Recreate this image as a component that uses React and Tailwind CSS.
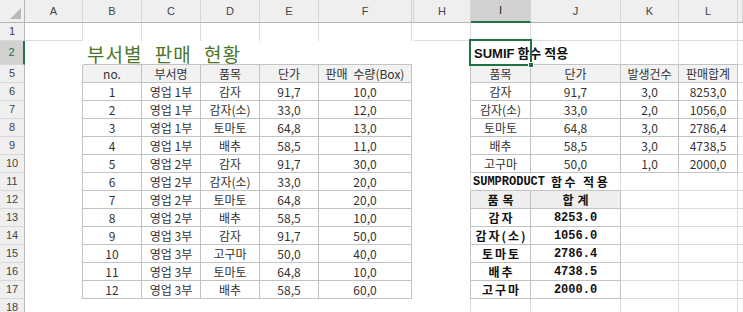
import React from 'react';

const FK = "font-['Noto_Sans_CJK_KR',sans-serif]";
const FM = "font-['Liberation_Mono','Noto_Sans_CJK_KR',monospace]";

const TB = 'border-r border-b border-[#c3c3c3]';
const GB = 'border-r border-b border-[#dcdcdc]';
const GR = 'border-r border-[#dcdcdc]';
const TR = 'border-r border-[#c3c3c3]';
const GBo = 'border-b border-[#dcdcdc]';
const TBo = 'border-b border-[#c3c3c3]';

const wRH = 'w-[25px]';
const wA = 'w-[58px]';
const wB = 'w-[59px]';
const wF = 'w-[93px]';
const wG = 'w-[2px]';
const wH = 'w-[57px]';
const wI = 'w-[60px]';
const wJ = 'w-[90px]';
const wK = 'w-[58px]';
const wL = 'w-[59px]';
const wM = 'flex-1 min-w-0';

function C({ w, cls = '', children }) {
  return (
    <div className={`${w} shrink-0 h-full flex items-center justify-center leading-none whitespace-nowrap ${cls}`}>
      {children}
    </div>
  );
}

function RH({ n, sel }) {
  return (
    <div
      className={`${wRH} shrink-0 h-full flex items-center justify-center text-[11px] leading-none font-['Liberation_Sans',sans-serif] border-b border-b-[#d8d8d8] ${
        sel
          ? 'bg-[#d2d2d2] border-r-2 border-r-[#217346] text-[#217346]'
          : 'bg-[#efefef] border-r border-r-[#bababa] text-[#444]'
      }`}
    >
      {n}
    </div>
  );
}

function HC({ w, label, sel, cls = '' }) {
  return (
    <div
      className={`${w} shrink-0 h-full flex items-center justify-center text-[11px] leading-none font-['Liberation_Sans',sans-serif] border-r border-r-[#d5d5d5] ${
        sel
          ? 'bg-[#d2d2d2] border-b-2 border-b-[#217346] text-[#222]'
          : 'bg-[#efefef] border-b border-b-[#b5b5b5] text-[#444]'
      } ${cls}`}
    >
      {label}
    </div>
  );
}

const dataL = [
  [1, '영업 1부', '감자', '91,7', '10,0'],
  [2, '영업 1부', '감자(소)', '33,0', '12,0'],
  [3, '영업 1부', '토마토', '64,8', '13,0'],
  [4, '영업 1부', '배추', '58,5', '11,0'],
  [5, '영업 2부', '감자', '91,7', '30,0'],
  [6, '영업 2부', '감자(소)', '33,0', '20,0'],
  [7, '영업 2부', '토마토', '64,8', '20,0'],
  [8, '영업 2부', '배추', '58,5', '10,0'],
  [9, '영업 3부', '감자', '91,7', '50,0'],
  [10, '영업 3부', '고구마', '50,0', '40,0'],
  [11, '영업 3부', '토마토', '64,8', '10,0'],
  [12, '영업 3부', '배추', '58,5', '60,0'],
];

const dataR = [
  ['감자', '91,7', '3,0', '8253,0'],
  ['감자(소)', '33,0', '2,0', '1056,0'],
  ['토마토', '64,8', '3,0', '2786,4'],
  ['배추', '58,5', '3,0', '4738,5'],
  ['고구마', '50,0', '1,0', '2000,0'],
];

const dataS = [
  ['감자', '8253.0'],
  ['감자(소)', '1056.0'],
  ['토마토', '2786.4'],
  ['배추', '4738.5'],
  ['고구마', '2000.0'],
];

export default function App() {
  const rows = [];
  for (let i = 0; i < 12; i++) {
    const d = dataL[i];
    const r = 6 + i;
    let right;
    if (i < 5) {
      const q = dataR[i];
      right = (
        <>
          <C w={wH} cls={TR} />
          <C w={wI} cls={TB}>{q[0]}</C>
          <C w={wJ} cls={TB}>{q[1]}</C>
          <C w={wK} cls={TB}>{q[2]}</C>
          <C w={wL} cls={TB}>{q[3]}</C>
          <C w={wM} cls={GBo} />
        </>
      );
    } else if (i === 5) {
      right = (
        <>
          <C w={wH} cls={GR} />
          <C w={wI} cls={`${TBo} justify-start pl-[2px] overflow-visible relative z-10 ${FM} font-bold text-[12px] text-[#111]`}>
            <span>SUMPRODUCT</span>
            <span className={`${FK} tracking-[2.5px] ml-[6px]`}>함수</span>
            <span className={`${FK} tracking-[2.5px] ml-[5px]`}>적용</span>
          </C>
          <C w={wJ} cls={`border-b border-[#c3c3c3] border-r border-r-[#dcdcdc]`} />
          <C w={wK} cls={GB} />
          <C w={wL} cls={GB} />
          <C w={wM} cls={GBo} />
        </>
      );
    } else if (i === 6) {
      right = (
        <>
          <C w={wH} cls={TR} />
          <C w={wI} cls={`${TB} bg-[#eeeeee] ${FK} font-bold text-[12px] text-[#111] tracking-[4px] pl-[4px]`}>품목</C>
          <C w={wJ} cls={`${TB} bg-[#eeeeee] ${FK} font-bold text-[12px] text-[#111] tracking-[4px] pl-[4px]`}>합계</C>
          <C w={wK} cls={GB} />
          <C w={wL} cls={GB} />
          <C w={wM} cls={GBo} />
        </>
      );
    } else {
      const s = dataS[i - 7];
      right = (
        <>
          <C w={wH} cls={TR} />
          <C w={wI} cls={`${TB} ${FK} font-bold text-[12px] text-[#111] tracking-[2px] pl-[2px]`}>{s[0]}</C>
          <C w={wJ} cls={`${TB} ${FM} font-bold text-[12px] text-[#111]`}>{s[1]}</C>
          <C w={wK} cls={GB} />
          <C w={wL} cls={GB} />
          <C w={wM} cls={GBo} />
        </>
      );
    }
    rows.push(
      <div key={r} className="flex h-[18px]">
        <RH n={r} />
        <C w={wA} cls={TR} />
        <C w={wB} cls={TB}>{d[0]}</C>
        <C w={wB} cls={TB}>{d[1]}</C>
        <C w={wB} cls={TB}>{d[2]}</C>
        <C w={wB} cls={TB}>{d[3]}</C>
        <C w={wF} cls={TB}>{d[4]}</C>
        <C w={wG} />
        {right}
      </div>
    );
  }

  return (
    <div className={`w-[743px] h-[312px] overflow-hidden bg-white text-[12px] text-[#333] ${FK}`}>
      {/* column headers */}
      <div className="flex h-[23px]">
        <div className={`${wRH} shrink-0 h-full bg-[#efefef] border-r border-b border-[#b5b5b5] relative`}>
          <svg className="absolute right-[3px] bottom-[3px]" width="11" height="11" viewBox="0 0 11 11">
            <polygon points="11,0 11,11 0,11" fill="#b9b9b9" />
          </svg>
        </div>
        <HC w={wA} label="A" />
        <HC w={wB} label="B" />
        <HC w={wB} label="C" />
        <HC w={wB} label="D" />
        <HC w={wB} label="E" />
        <HC w={wF} label="F" cls="border-r-[#b8b8b8]" />
        <HC w={wG} label="" cls="border-r-[#b8b8b8]" />
        <HC w={wH} label="H" />
        <HC w={wI} label="I" sel />
        <HC w={wJ} label="J" />
        <HC w={wK} label="K" />
        <HC w={wL} label="L" />
        <HC w={wM} label="" />
      </div>

      {/* row 1 */}
      <div className="flex h-[18px]">
        <RH n={1} />
        <C w={wA} cls={GB} />
        <C w={wB} cls={GR} />
        <C w={wB} cls={GR} />
        <C w={wB} cls={GR} />
        <C w={wB} cls={GR} />
        <C w={wF} cls={GR} />
        <C w={wG} />
        <C w={wH} cls={GB} />
        <C w={wI} cls={GB} />
        <C w={wJ} cls={GB} />
        <C w={wK} cls={GB} />
        <C w={wL} cls={GB} />
        <C w={wM} cls={GBo} />
      </div>

      {/* row 2 */}
      <div className="flex h-[24px]">
        <RH n={2} sel />
        <C w={wA} />
        <C w={wB} cls={`${TBo} justify-start pl-[4px] overflow-visible relative z-10`}>
          <span className="text-[19px] leading-[19px] text-[#4a7628] tracking-[1px] [word-spacing:7px] mt-[1px]">부서별 판매 현황</span>
        </C>
        <C w={wB} cls={TBo} />
        <C w={wB} cls={TBo} />
        <C w={wB} cls={TBo} />
        <C w={wF} cls={TBo} />
        <C w={wG} />
        <C w={wH} />
        <C w={wI} cls={`${TBo} justify-start pl-[3px] overflow-visible relative z-10`}>
          <span className="font-bold text-[13px] text-[#111]">
            <span className="font-['Liberation_Sans',sans-serif]">SUMIF</span> 함수 적용
          </span>
          <div className="absolute left-[-2px] top-[-2px] right-[-1px] bottom-[-2px] border-2 border-[#217346] pointer-events-none">
            <div className="absolute right-[-4px] bottom-[-4px] w-[6px] h-[6px] bg-[#217346] border border-white" />
          </div>
        </C>
        <C w={wJ} cls={`${TBo} border-r border-r-[#dcdcdc]`} />
        <C w={wK} cls={`${TBo} border-r border-r-[#dcdcdc]`} />
        <C w={wL} cls={`${TBo} border-r border-r-[#dcdcdc]`} />
        <C w={wM} cls={GBo} />
      </div>

      {/* row 5 */}
      <div className="flex h-[18px]">
        <RH n={5} />
        <C w={wA} cls={TR} />
        <C w={wB} cls={`${TB} bg-[#f2f2f2]`}>no.</C>
        <C w={wB} cls={`${TB} bg-[#f2f2f2]`}>부서명</C>
        <C w={wB} cls={`${TB} bg-[#f2f2f2]`}>품목</C>
        <C w={wB} cls={`${TB} bg-[#f2f2f2]`}>단가</C>
        <C w={wF} cls={`${TB} bg-[#f2f2f2] [word-spacing:3px]`}>판매 수량(Box)</C>
        <C w={wG} />
        <C w={wH} cls={TR} />
        <C w={wI} cls={`${TB} bg-[#f2f2f2]`}>품목</C>
        <C w={wJ} cls={`${TB} bg-[#f2f2f2]`}>단가</C>
        <C w={wK} cls={`${TB} bg-[#f2f2f2]`}>발생건수</C>
        <C w={wL} cls={`${TB} bg-[#f2f2f2]`}>판매합계</C>
        <C w={wM} cls={GBo} />
      </div>

      {rows}

      {/* row 18 */}
      <div className="flex h-[18px]">
        <RH n={18} />
        <C w={wA} />
        <C w={wB} />
        <C w={wB} />
        <C w={wB} />
        <C w={wB} />
        <C w={wF} />
        <C w={wG} />
        <C w={wH} cls={GR} />
        <C w={wI} cls={GR} />
        <C w={wJ} cls={GR} />
        <C w={wK} cls={GR} />
        <C w={wL} cls={GR} />
        <C w={wM} />
      </div>
    </div>
  );
}
